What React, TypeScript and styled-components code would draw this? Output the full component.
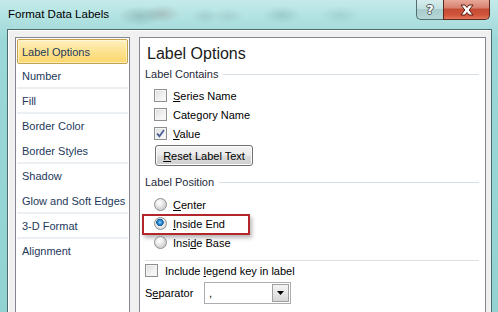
import React from 'react'
import styled, { createGlobalStyle } from 'styled-components'

const GlobalStyle = createGlobalStyle`
  body {
    margin: 0;
    font-family: 'Liberation Sans', Arial, sans-serif;
    font-size: 11px;
    white-space: nowrap;
  }
`

type CategoryItem = { name: string; divider?: boolean; selected?: boolean }

const categories: CategoryItem[] = [
  { name: 'Label Options', selected: true },
  { name: 'Number', divider: true },
  { name: 'Fill', divider: true },
  { name: 'Border Color' },
  { name: 'Border Styles', divider: true },
  { name: 'Shadow' },
  { name: 'Glow and Soft Edges', divider: true },
  { name: '3-D Format', divider: true },
  { name: 'Alignment' },
]

// label with one underlined access key
const Accel = ({ text, at }: { text: string; at: number }) => (
  <>
    {text.slice(0, at)}
    <u>{text[at]}</u>
    {text.slice(at + 1)}
  </>
)

const CheckMark = () => (
  <svg width="9" height="9" viewBox="0 0 9 9">
    <path d="M1 4.5 L3.4 7.2 L8 1" fill="none" stroke="#4c5f96" strokeWidth="1.8" />
  </svg>
)

const CloseGlyph = () => (
  <svg width="16" height="12" viewBox="0 0 16 12">
    <path
      d="M2 1 H6 L8 3.5 L10 1 H14 L10.2 6 L14 11 H10 L8 8.5 L6 11 H2 L5.8 6 Z"
      fill="#fff"
      stroke="#5a1e14"
      strokeWidth="1"
      strokeLinejoin="round"
    />
  </svg>
)

const Checkbox = ({ checked }: { checked?: boolean }) => (
  <CheckBoxBox>{checked && <CheckMark />}</CheckBoxBox>
)

export default function App() {
  return (
    <Window>
      <GlobalStyle />
      <TitleBar>
        <Title>Format Data Labels</Title>
        <CaptionButtons>
          <HelpButton>?</HelpButton>
          <CloseButton>
            <CloseGlyph />
          </CloseButton>
        </CaptionButtons>
      </TitleBar>

      <Client>
        <CategoryList>
          {categories.map((c) => (
            <CategoryRow key={c.name} $divider={c.divider} $selected={c.selected}>
              {c.name}
            </CategoryRow>
          ))}
        </CategoryList>

        <Panel>
          <Heading>Label Options</Heading>

          <SectionHeader>
            <span>Label Contains</span>
            <Rule />
          </SectionHeader>
          <OptionList $top={4}>
            <OptionRow>
              <Checkbox />
              <span><Accel text="Series Name" at={0} /></span>
            </OptionRow>
            <OptionRow>
              <Checkbox />
              <span><Accel text="Category Name" at={4} /></span>
            </OptionRow>
            <OptionRow>
              <Checkbox checked />
              <span><Accel text="Value" at={0} /></span>
            </OptionRow>
          </OptionList>
          <PushButton>
            <Accel text="Reset Label Text" at={0} />
          </PushButton>

          <SectionHeader $top={8}>
            <span>Label Position</span>
            <Rule />
          </SectionHeader>
          <OptionList $top={5}>
            <OptionRow>
              <Radio />
              <span><Accel text="Center" at={0} /></span>
            </OptionRow>
            <OptionRow>
              <Radio $checked />
              <span><Accel text="Inside End" at={0} /></span>
              <Highlight />
            </OptionRow>
            <OptionRow>
              <Radio />
              <span><Accel text="Inside Base" at={4} /></span>
            </OptionRow>
          </OptionList>

          <Divider />

          <LegendRow>
            <Checkbox />
            <span><Accel text="Include legend key in label" at={8} /></span>
          </LegendRow>

          <SeparatorRow>
            <FieldLabel><Accel text="Separator" at={1} /></FieldLabel>
            <Combo>
              <ComboValue>,</ComboValue>
              <ComboArrow>
                <svg width="7" height="4" viewBox="0 0 7 4">
                  <path d="M0 0 H7 L3.5 4 Z" fill="#000" />
                </svg>
              </ComboArrow>
            </Combo>
          </SeparatorRow>
        </Panel>
      </Client>
    </Window>
  )
}

const Window = styled.div`
  width: 498px;
  height: 312px;
  overflow: hidden;
  display: flex;
  flex-direction: column;
  background:
    radial-gradient(ellipse 22px 10px at 140px 16px, rgba(70, 110, 110, 0.28), transparent),
    radial-gradient(ellipse 18px 9px at 162px 14px, rgba(110, 70, 70, 0.22), transparent),
    radial-gradient(ellipse 14px 8px at 205px 16px, rgba(70, 110, 110, 0.16), transparent),
    radial-gradient(ellipse 16px 8px at 228px 16px, rgba(70, 110, 110, 0.14), transparent),
    radial-gradient(ellipse 20px 9px at 282px 15px, rgba(60, 110, 110, 0.2), transparent),
    radial-gradient(ellipse 20px 9px at 340px 15px, rgba(60, 110, 110, 0.14), transparent),
    linear-gradient(180deg, #c4eaea 0, #aee0e0 22px, #9bd8d8 40px, #92d3d2 100%);
`

const TitleBar = styled.div`
  height: 29px;
  flex: none;
  display: flex;
  align-items: flex-start;
  justify-content: space-between;
  padding: 0 8px 0 8px;
`

const Title = styled.div`
  font-size: 11.5px;
  line-height: 29px;
  color: #000;
`

const CaptionButtons = styled.div`
  display: flex;
  height: 20px;
`

const HelpButton = styled.div`
  width: 27px;
  height: 20px;
  box-sizing: border-box;
  border: 1px solid #4e6e70;
  border-top: none;
  border-right: none;
  border-radius: 0 0 0 5px;
  background: linear-gradient(180deg, #d6ecec 0, #c2e0e0 45%, #a9cccc 50%, #b4d6d6 100%);
  display: flex;
  align-items: center;
  justify-content: center;
  font-family: 'DejaVu Sans', sans-serif;
  font-weight: bold;
  font-size: 13px;
  color: #fff;
  text-shadow: -1px 0 #4a5a5a, 1px 0 #4a5a5a, 0 -1px #4a5a5a, 0 1px #4a5a5a;
`

const CloseButton = styled.div`
  width: 47px;
  height: 20px;
  box-sizing: border-box;
  border: 1px solid #5e2a20;
  border-top: none;
  border-radius: 0 0 5px 0;
  background: linear-gradient(180deg, #e9a899 0, #d88270 40%, #c44b34 50%, #d2553c 80%, #e07a5a 100%);
  display: flex;
  align-items: center;
  justify-content: center;
`

const Client = styled.div`
  flex: none;
  height: 300px;
  margin: 0 6px 0 7px;
  border: 1px solid #4c6a6c;
  border-bottom: none;
  background: #f0f0f0;
  box-shadow: inset 1px 1px 0 #ffffff;
  display: flex;
  gap: 9px;
  padding: 7px 5px 0 7px;
`

const CategoryList = styled.div`
  width: 115px;
  flex: none;
  box-sizing: border-box;
  border: 1px solid #828790;
  background: #fff;
  padding: 1px;
`

const CategoryRow = styled.div<{ $divider?: boolean; $selected?: boolean }>`
  height: 25px;
  box-sizing: border-box;
  padding-left: 5px;
  display: flex;
  align-items: center;
  color: #1e395b;
  font-size: 11px;
  border-bottom: 2px solid ${({ $divider }) => ($divider ? '#eceff4' : 'transparent')};
  ${({ $selected }) =>
    $selected &&
    `
    border: 1px solid #c5a24a;
    border-radius: 2px;
    padding-left: 4px;
    background: linear-gradient(180deg, #fef0c0 0, #fde394 45%, #fcd66a 100%);
    box-shadow: inset 0 0 0 1px rgba(255, 250, 225, 0.7);
  `}
`

const Panel = styled.div`
  flex: 1;
  box-sizing: border-box;
  border: 1px solid #828790;
  background: #fff;
  padding: 4px 6px 0 5px;
  display: flex;
  flex-direction: column;
  color: #000;
`

const Heading = styled.div`
  font-size: 16px;
  line-height: 24px;
  height: 24px;
  margin-left: 2px;
  color: #1a1a1a;
`

const SectionHeader = styled.div<{ $top?: number }>`
  display: flex;
  align-items: center;
  gap: 5px;
  height: 16px;
  margin-top: ${({ $top }) => $top ?? 0}px;
  color: #1e2a3a;
`

const Rule = styled.div`
  flex: 1;
  height: 1px;
  background: #d5dfe5;
`

const OptionList = styled.div<{ $top: number }>`
  display: flex;
  flex-direction: column;
  margin-top: ${({ $top }) => $top}px;
`

const OptionRow = styled.div`
  position: relative;
  display: flex;
  align-items: center;
  gap: 6px;
  height: 19px;
  padding-left: 9px;
`

const CheckBoxBox = styled.div`
  width: 13px;
  height: 13px;
  flex: none;
  box-sizing: border-box;
  border: 1px solid #8e8f8f;
  background: linear-gradient(135deg, #dcdcdc 0, #f2f2f2 60%, #fbfbfb 100%);
  box-shadow: inset 0 0 0 1px #f4f4f4;
  display: flex;
  align-items: center;
  justify-content: center;
`

const Radio = styled.div<{ $checked?: boolean }>`
  width: 13px;
  height: 13px;
  flex: none;
  box-sizing: border-box;
  border-radius: 50%;
  border: 1px solid #8e8f8f;
  background: ${({ $checked }) =>
    $checked
      ? 'radial-gradient(circle at 45% 40%, #8fd8ff 0, #2a8ad0 2px, #175d9c 3.5px, #f0f0f0 4px, #dcdcdc 6px)'
      : 'radial-gradient(circle at 40% 35%, #ffffff 0, #eeeeee 3px, #d4d4d4 6px)'};
`

const PushButton = styled.div`
  width: 98px;
  height: 21px;
  margin: 2px 0 0 10px;
  box-sizing: border-box;
  border: 1px solid #707070;
  border-radius: 3px;
  background: linear-gradient(180deg, #f2f2f2 0, #ebebeb 48%, #dddddd 52%, #cfcfcf 100%);
  box-shadow: inset 0 0 0 1px #fcfcfc;
  display: flex;
  align-items: center;
  justify-content: center;
`

const Highlight = styled.div`
  position: absolute;
  left: -3px;
  top: 0;
  width: 108px;
  height: 21px;
  box-sizing: border-box;
  border: 2px solid #b3262b;
  box-shadow: 2px 3px 4px rgba(0, 0, 0, 0.28);
  pointer-events: none;
`

const Divider = styled.div`
  height: 1px;
  margin-top: 8px;
  background: #dcdfe3;
`

const LegendRow = styled.div`
  display: flex;
  align-items: center;
  gap: 7px;
  height: 19px;
`

const SeparatorRow = styled.div`
  display: flex;
  align-items: center;
  height: 22px;
  margin-top: 2px;
`

const FieldLabel = styled.div`
  width: 59px;
  flex: none;
`

const Combo = styled.div`
  width: 87px;
  height: 22px;
  box-sizing: border-box;
  border: 1px solid #abadb3;
  display: flex;
  align-items: stretch;
  background: #fff;
`

const ComboValue = styled.div`
  flex: 1;
  padding-left: 4px;
  display: flex;
  align-items: center;
`

const ComboArrow = styled.div`
  width: 17px;
  margin: 1px;
  box-sizing: border-box;
  border: 1px solid #a0a0a0;
  background: linear-gradient(180deg, #f4f4f4 0, #e6e6e6 50%, #d6d6d6 100%);
  display: flex;
  align-items: center;
  justify-content: center;
`
